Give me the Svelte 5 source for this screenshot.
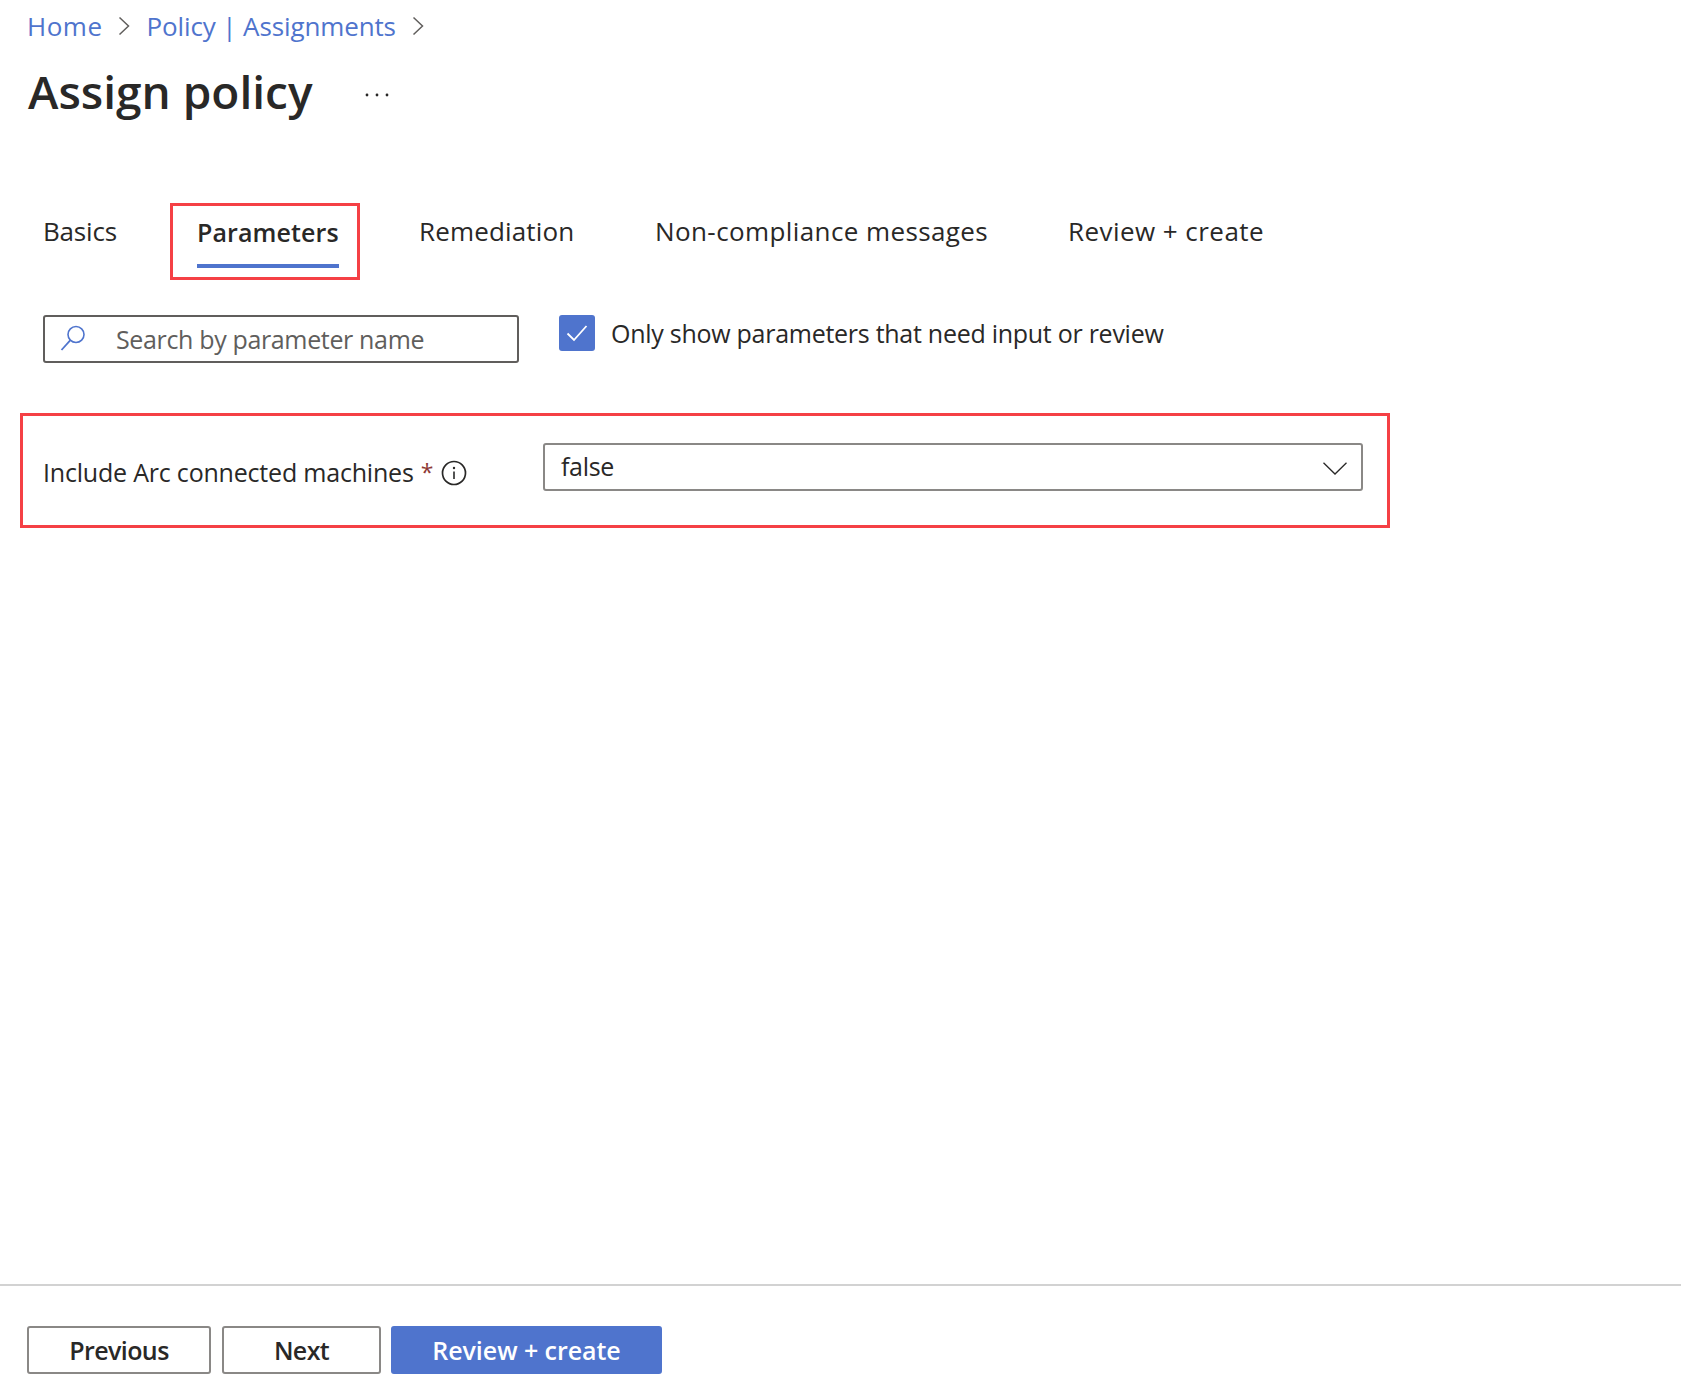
<script>
  const tabs = [
    { label: 'Basics' },
    { label: 'Parameters', active: true },
    { label: 'Remediation' },
    { label: 'Non-compliance messages' },
    { label: 'Review + create' }
  ];
</script>

<div class="page">
  <nav class="crumbs">
    <span class="home">Home</span>
    <svg class="chev" width="12" height="20" viewBox="0 0 12 20"><path d="M1.5 1.5 10.5 10 1.5 18.5" /></svg>
    <span class="policy">Policy | Assignments</span>
    <svg class="chev" width="12" height="20" viewBox="0 0 12 20"><path d="M1.5 1.5 10.5 10 1.5 18.5" /></svg>
  </nav>

  <header class="title">
    <h1>Assign policy</h1>
    <svg class="more" width="24" height="4" viewBox="0 0 24 4" fill="#292827">
      <circle cx="2" cy="2" r="1.4" /><circle cx="12" cy="2" r="1.4" /><circle cx="22" cy="2" r="1.4" />
    </svg>
  </header>

  <div class="tabs">
    {#each tabs as t}
      {#if t.active}
        <div class="callout-tab">
          <div class="tab active">{t.label}</div>
        </div>
      {:else}
        <div class="tab">{t.label}</div>
      {/if}
    {/each}
  </div>

  <div class="filters">
    <div class="search">
      <svg width="28" height="28" viewBox="0 0 28 28" fill="none">
        <circle cx="17" cy="10.5" r="8" stroke="#4f74cd" stroke-width="1.6" />
        <path d="M11.4 16.2 2.5 26" stroke="#4f74cd" stroke-width="1.8" />
      </svg>
      <span>Search by parameter name</span>
    </div>
    <div class="check">
      <span class="box">
        <svg width="24" height="20" viewBox="0 0 24 20" fill="none"><path d="M2.5 10.5 9 17 21.5 3" stroke="#fff" stroke-width="1.8" /></svg>
      </span>
      <span class="check-text">Only show parameters that need input or review</span>
    </div>
  </div>

  <div class="param">
    <div class="label">
      <span>Include Arc connected machines</span>
      <span class="req">*</span>
      <svg class="info" width="26" height="26" viewBox="0 0 26 26" fill="none">
        <circle cx="13" cy="13" r="11.5" stroke="#292827" stroke-width="1.7" />
        <circle cx="13" cy="8" r="1.2" fill="#292827" />
        <path d="M13 11.5V19" stroke="#292827" stroke-width="1.6" />
      </svg>
    </div>
    <div class="select">
      <span>false</span>
      <svg width="24" height="13" viewBox="0 0 24 13" fill="none"><path d="M.5 .8 12 12 23.500 .8" stroke="#292827" stroke-width="1.3" /></svg>
    </div>
  </div>

  <footer>
    <button class="btn previous">Previous</button>
    <button class="btn next">Next</button>
    <button class="btn primary">Review + create</button>
  </footer>
</div>

<style>
  :global(body) { margin: 0; background: #fff; }
  .page {
    height: 1393px;
    display: flex;
    flex-direction: column;
    font-family: "Open Sans", "Noto Sans", sans-serif;
    font-size: 25px;
    letter-spacing: -0.3px;
    color: #292827;
    overflow: hidden;
  }
  .crumbs {
    display: flex;
    align-items: center;
    height: 34px;
    margin: 9px 0 0 27px;
    color: #4f74cd;
    gap: 16px;
    font-size: 26px;
    letter-spacing: 0;
  }
  .home { letter-spacing: 0.5px; }
  .policy { letter-spacing: -0.12px; }
  .chev path { fill: none; stroke: #605e5c; stroke-width: 1.5; }
  .title {
    display: flex;
    align-items: center;
    margin: 17px 0 0 28px;
    height: 62px;
  }
  h1 {
    margin: 0;
    font-size: 46px;
    font-weight: 600;
    letter-spacing: 0;
    line-height: 62px;
  }
  .more {
    margin: 8px 0 0 52px;
  }
  .tabs {
    display: flex;
    align-items: flex-start;
    margin: 81px 0 0 43px;
    height: 77px;
    font-size: 26px;
    letter-spacing: 0.4px;
  }
  .tab { padding-top: 10px; height: 61px; box-sizing: border-box; white-space: nowrap; }
  .tabs > .tab:nth-child(1) { width: 127px; letter-spacing: -0.2px; }
  .tabs > .tab:nth-child(3) { width: 236px; margin-left: 59px; letter-spacing: 0.15px; }
  .tabs > .tab:nth-child(4) { width: 413px; }
  .tabs > .tab:nth-child(5) { letter-spacing: 0.45px; }
  .callout-tab {
    width: 190px;
    height: 77px;
    box-sizing: border-box;
    border: 3px solid #f54045;
    padding-left: 24px;
  }
  .tab.active {
    display: inline-block;
    font-size: 25px;
    font-weight: 600;
    letter-spacing: 0.1px;
    height: 62px;
    padding-top: 9px;
    border-bottom: 4px solid #4f74cd;
  }
  .filters {
    display: flex;
    margin: 35px 0 0 43px;
  }
  .search {
    width: 476px;
    height: 48px;
    box-sizing: border-box;
    border: 2px solid #605e5c;
    border-radius: 3px;
    display: flex;
    align-items: center;
    padding: 0 0 0 15px;
    gap: 29px;
    color: #605e5c;
    letter-spacing: -0.35px;
  }
  .search svg { margin-top: -2px; margin-left: -1px; }
  .check {
    display: flex;
    align-items: center;
    gap: 16px;
    margin: 0 0 0 40px;
    height: 36px;
  }
  .check-text { letter-spacing: -0.27px; }
  .box {
    width: 36px;
    height: 36px;
    border-radius: 3px;
    background: #4f74cd;
    display: flex;
    align-items: center;
    justify-content: center;
  }
  .param {
    display: flex;
    align-items: flex-start;
    box-sizing: border-box;
    width: 1370px;
    height: 115px;
    margin: 50px 0 0 20px;
    border: 3px solid #f54045;
    padding: 27px 24px 0 20px;
  }
  .label {
    width: 500px;
    display: flex;
    align-items: center;
    height: 48px;
    padding-top: 5px;
    letter-spacing: -0.2px;
    white-space: nowrap;
  }
  .req { color: #8e3a36; margin-left: 7px; font-size: 23px; }
  .info { margin: 1px 0 0 8px; }
  .select {
    flex: 1;
    height: 48px;
    box-sizing: border-box;
    border: 2px solid #8a8886;
    border-radius: 3px;
    display: flex;
    align-items: center;
    justify-content: space-between;
    padding: 0 14px 2px 16px;
  }
  .select svg { margin-top: 5px; }
  footer {
    margin-top: auto;
    height: 109px;
    box-sizing: border-box;
    border-top: 2px solid #d2d2d2;
    display: flex;
    align-items: flex-start;
    gap: 11px;
    padding: 40px 0 0 27px;
  }
  .btn {
    height: 48px;
    box-sizing: border-box;
    border: 2px solid #8a8886;
    border-radius: 3px;
    background: #fff;
    font: inherit;
    font-weight: 600;
    letter-spacing: -0.6px;
    color: #292827;
    padding: 0;
  }
  .previous { width: 184px; }
  .next { width: 159px; }
  .primary {
    width: 271px;
    margin-left: -1px;
    background: #4f74cd;
    border-color: #4f74cd;
    color: #fff;
    letter-spacing: -0.05px;
  }
</style>
